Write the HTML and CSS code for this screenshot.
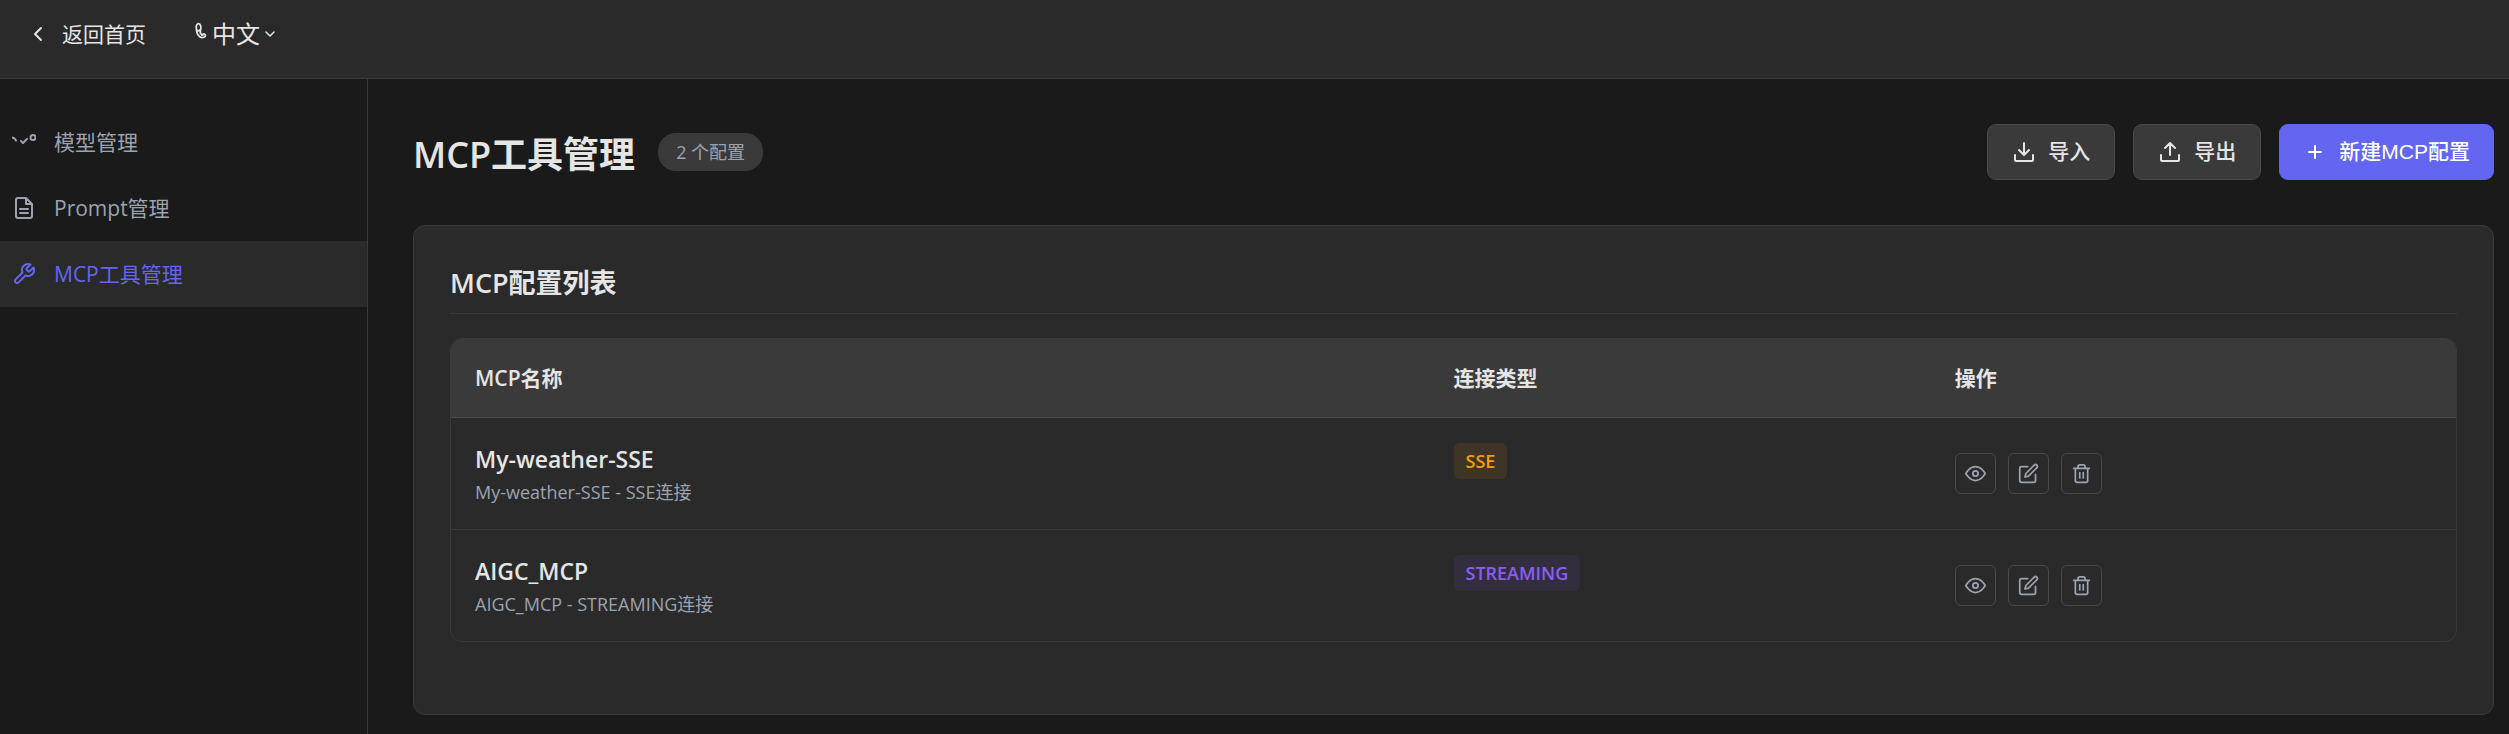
FILE: index.html
```html
<!DOCTYPE html>
<html lang="zh-CN">
<head>
<meta charset="utf-8">
<title>MCP工具管理</title>
<link rel="stylesheet" href="styles.css">
</head>
<body>
<svg class="sprite" aria-hidden="true">
  <symbol id="eye" viewBox="0 0 24 24"><path d="M1 12s4-8 11-8 11 8 11 8-4 8-11 8-11-8-11-8z"/><circle cx="12" cy="12" r="3"/></symbol>
  <symbol id="edit" viewBox="0 0 24 24"><path d="M11 4H4a2 2 0 0 0-2 2v14a2 2 0 0 0 2 2h14a2 2 0 0 0 2-2v-7"/><path d="M18.5 2.500a2.100 2.100 0 0 1 3 3L12 15l-4 1 1-4z"/></symbol>
  <symbol id="trash" viewBox="0 0 24 24"><path d="M3 6h18M19 6v14a2 2 0 0 1-2 2H7a2 2 0 0 1-2-2V6m3 0V4a2 2 0 0 1 2-2h4a2 2 0 0 1 2 2v2M10 11v6M14 11v6"/></symbol>
</svg>
<div class="app">
  <header class="topbar">
    <a class="back" href="#">
      <svg class="icon" viewBox="0 0 24 24"><path d="M15 6l-6 6 6 6"/></svg>
      <span>返回首页</span>
    </a>
    <button class="lang" type="button">
      <svg class="lang-mark" viewBox="0 0 12 24"><path d="M5.500 9C6.500 6 5.500 3 4 3 2.500 3 1.500 5 2 7.500c.5 2 2 2.500 3 1M2 7c0 4.500 2 8 5 8 2.500 0 3.500-1.500 2.500-2.500s-2-.5-2.500.5"/><path d="M5.500 9.500c-.5 2 .5 3 2 3.500"/></svg>
      <span>中文</span>
      <svg class="lang-arrow" viewBox="0 0 12 12"><path d="M2 4l4 4 4-4"/></svg>
    </button>
  </header>
  <div class="body">
    <nav class="sidebar">
      <a class="nav-item" href="#">
        <svg class="icon" viewBox="0 0 24 24"><path d="M0 7.500c2 0 3 1 4 3M9 11l2 2 4-4"/><circle cx="21" cy="7.500" r="2.500"/></svg>
        <span>模型管理</span>
      </a>
      <a class="nav-item" href="#">
        <svg class="icon" viewBox="0 0 24 24"><path d="M14 2H6a2 2 0 0 0-2 2v16a2 2 0 0 0 2 2h12a2 2 0 0 0 2-2V8zM14 2v6h6M16 13H8M16 17H8"/></svg>
        <span>Prompt管理</span>
      </a>
      <a class="nav-item active" href="#" aria-current="page">
        <svg class="icon" viewBox="0 0 24 24"><path d="M14.700 6.300a1 1 0 0 0 0 1.400l1.600 1.600a1 1 0 0 0 1.400 0l3.770-3.770a6 6 0 0 1-7.940 7.940l-6.910 6.910a2.120 2.120 0 0 1-3-3l6.910-6.910a6 6 0 0 1 7.940-7.940l-3.760 3.760z"/></svg>
        <span>MCP工具管理</span>
      </a>
    </nav>
    <main class="main">
      <div class="page-head">
        <div class="page-title">
          <h1>MCP工具管理</h1>
          <span class="count">2 个配置</span>
        </div>
        <div class="buttons">
          <button class="btn" type="button">
            <svg class="icon" viewBox="0 0 24 24"><path d="M3 15v5a1 1 0 0 0 1 1h16a1 1 0 0 0 1-1v-5M12 3v12M7 10l5 5 5-5"/></svg>
            <span>导入</span>
          </button>
          <button class="btn" type="button">
            <svg class="icon" viewBox="0 0 24 24"><path d="M3 15v5a1 1 0 0 0 1 1h16a1 1 0 0 0 1-1v-5M12 15V3M7 8l5-5 5 5"/></svg>
            <span>导出</span>
          </button>
          <button class="btn primary" type="button">
            <svg class="icon" viewBox="0 0 24 24"><path d="M12 6v12M6 12h12"/></svg>
            <span>新建MCP配置</span>
          </button>
        </div>
      </div>
      <section class="card">
        <h2>MCP配置列表</h2>
        <div class="table-wrap">
          <table>
            <thead>
              <tr><th class="col-name" scope="col">MCP名称</th><th scope="col">连接类型</th><th scope="col">操作</th></tr>
            </thead>
            <tbody>
              <tr>
                <td><div class="name">My-weather-SSE</div><div class="desc">My-weather-SSE - SSE连接</div></td>
                <td><span class="tag sse">SSE</span></td>
                <td class="ops"><div class="actions">
                  <button type="button" aria-label="查看"><svg><use href="#eye"/></svg></button>
                  <button type="button" aria-label="编辑"><svg><use href="#edit"/></svg></button>
                  <button type="button" aria-label="删除"><svg><use href="#trash"/></svg></button>
                </div></td>
              </tr>
              <tr>
                <td><div class="name">AIGC_MCP</div><div class="desc">AIGC_MCP - STREAMING连接</div></td>
                <td><span class="tag streaming">STREAMING</span></td>
                <td class="ops"><div class="actions">
                  <button type="button" aria-label="查看"><svg><use href="#eye"/></svg></button>
                  <button type="button" aria-label="编辑"><svg><use href="#edit"/></svg></button>
                  <button type="button" aria-label="删除"><svg><use href="#trash"/></svg></button>
                </div></td>
              </tr>
            </tbody>
          </table>
        </div>
      </section>
    </main>
  </div>
</div>
</body>
</html>
```
FILE: styles.css
```css
* { box-sizing: border-box; }

body {
  margin: 0;
  background: #1a1a1a;
  color: #e5e5e5;
  font-family: "Segoe UI", "Open Sans", "Noto Sans CJK SC", sans-serif;
  font-size: 21px;
}

a { color: inherit; text-decoration: none; }
button { font-family: inherit; color: inherit; cursor: pointer; }
h1, h2 { margin: 0; font-weight: 600; }

svg {
  flex: none;
  fill: none;
  stroke: currentColor;
  stroke-width: 2;
  stroke-linecap: round;
  stroke-linejoin: round;
}

.sprite { display: none; }
.icon { width: 24px; height: 24px; }

.app { display: flex; flex-direction: column; min-height: 100vh; }

.topbar {
  display: flex;
  align-items: center;
  gap: 48px;
  padding: 14px 26px 24px;
  background: #2a2a2a;
  border-bottom: 1px solid #3a3a3a;
}

.back { display: flex; align-items: center; gap: 12px; line-height: 40px; }

.lang {
  display: flex;
  align-items: center;
  gap: 4px;
  padding: 0;
  border: 0;
  background: none;
  font-size: 24px;
  line-height: 40px;
}

.lang-mark { width: 14px; height: 28px; stroke-width: 1.5; }
.lang-arrow { width: 12px; height: 12px; stroke-width: 1.5; }

.body { flex: 1; display: flex; }

.sidebar {
  flex: none;
  width: 368px;
  padding-top: 30px;
  border-right: 1px solid #3a3a3a;
}

.nav-item {
  display: flex;
  align-items: center;
  gap: 18px;
  padding: 18px 12px;
  line-height: 30px;
  color: #9ca3af;
}

.nav-item.active { background: #2a2a2a; color: #6366f1; }

.main { flex: 1; min-width: 0; padding: 45px 15px 19px 45px; }

.page-head {
  display: flex;
  justify-content: space-between;
  align-items: center;
  margin-bottom: 45px;
}

.page-title { display: flex; align-items: center; gap: 23px; }
h1 { padding-top: 6px; font-size: 36px; line-height: 50px; }

.count {
  padding: 1px 18px 0;
  border-radius: 18px;
  background: #3a3a3a;
  color: #9ca3af;
  font-size: 18px;
  line-height: 37px;
}

.buttons { display: flex; gap: 18px; }

.btn {
  display: flex;
  align-items: center;
  gap: 12px;
  padding: 12px 24px;
  border: 1px solid #4a4a4a;
  border-radius: 9px;
  background: #3a3a3a;
  font-family: "Liberation Sans", "Noto Sans CJK SC", sans-serif;
  font-size: 21px;
  font-weight: 500;
  line-height: 30px;
}

.btn.primary {
  padding: 12px 23px;
  border-color: #6366f1;
  background: #6366f1;
  color: #fff;
}

.card {
  padding: 36px 36px 72px;
  border: 1px solid #3a3a3a;
  border-radius: 12px;
  background: #2a2a2a;
}

h2 {
  margin-bottom: 24px;
  padding-bottom: 10px;
  border-bottom: 1px solid #3a3a3a;
  font-size: 27px;
  line-height: 41px;
}

.table-wrap {
  overflow: hidden;
  border: 1px solid #3a3a3a;
  border-radius: 12px;
}

table { width: 100%; table-layout: fixed; border-collapse: separate; border-spacing: 0; }

th {
  padding: 24px 0;
  border-bottom: 1px solid #4a4a4a;
  background: #3a3a3a;
  font-weight: 600;
  line-height: 30px;
  text-align: left;
}

.col-name { width: 50%; }
td { padding: 24px 0 21px; vertical-align: top; }
th:first-child, td:first-child { padding-left: 24px; }
tr + tr td { border-top: 1px solid #3a3a3a; }

.name { font-size: 23px; font-weight: 600; line-height: 34px; }
.desc { color: #9ca3af; font-size: 18px; line-height: 32px; }

.tag {
  display: block;
  width: fit-content;
  margin-top: 1px;
  padding: 0 12px;
  border-radius: 6px;
  font-size: 18px;
  font-weight: 600;
  line-height: 36px;
}

.sse { background: rgba(245, 158, 11, 0.1); color: #f59e0b; }
.streaming { background: rgba(139, 92, 246, 0.1); color: #8b5cf6; }

td.ops { padding: 24px 0; vertical-align: middle; }
.actions { display: flex; gap: 12px; }

.actions button {
  display: flex;
  padding: 9px;
  border: 1px solid #4a4a4a;
  border-radius: 6px;
  background: none;
  color: #9ca3af;
}

.actions svg { width: 21px; height: 21px; }
```
